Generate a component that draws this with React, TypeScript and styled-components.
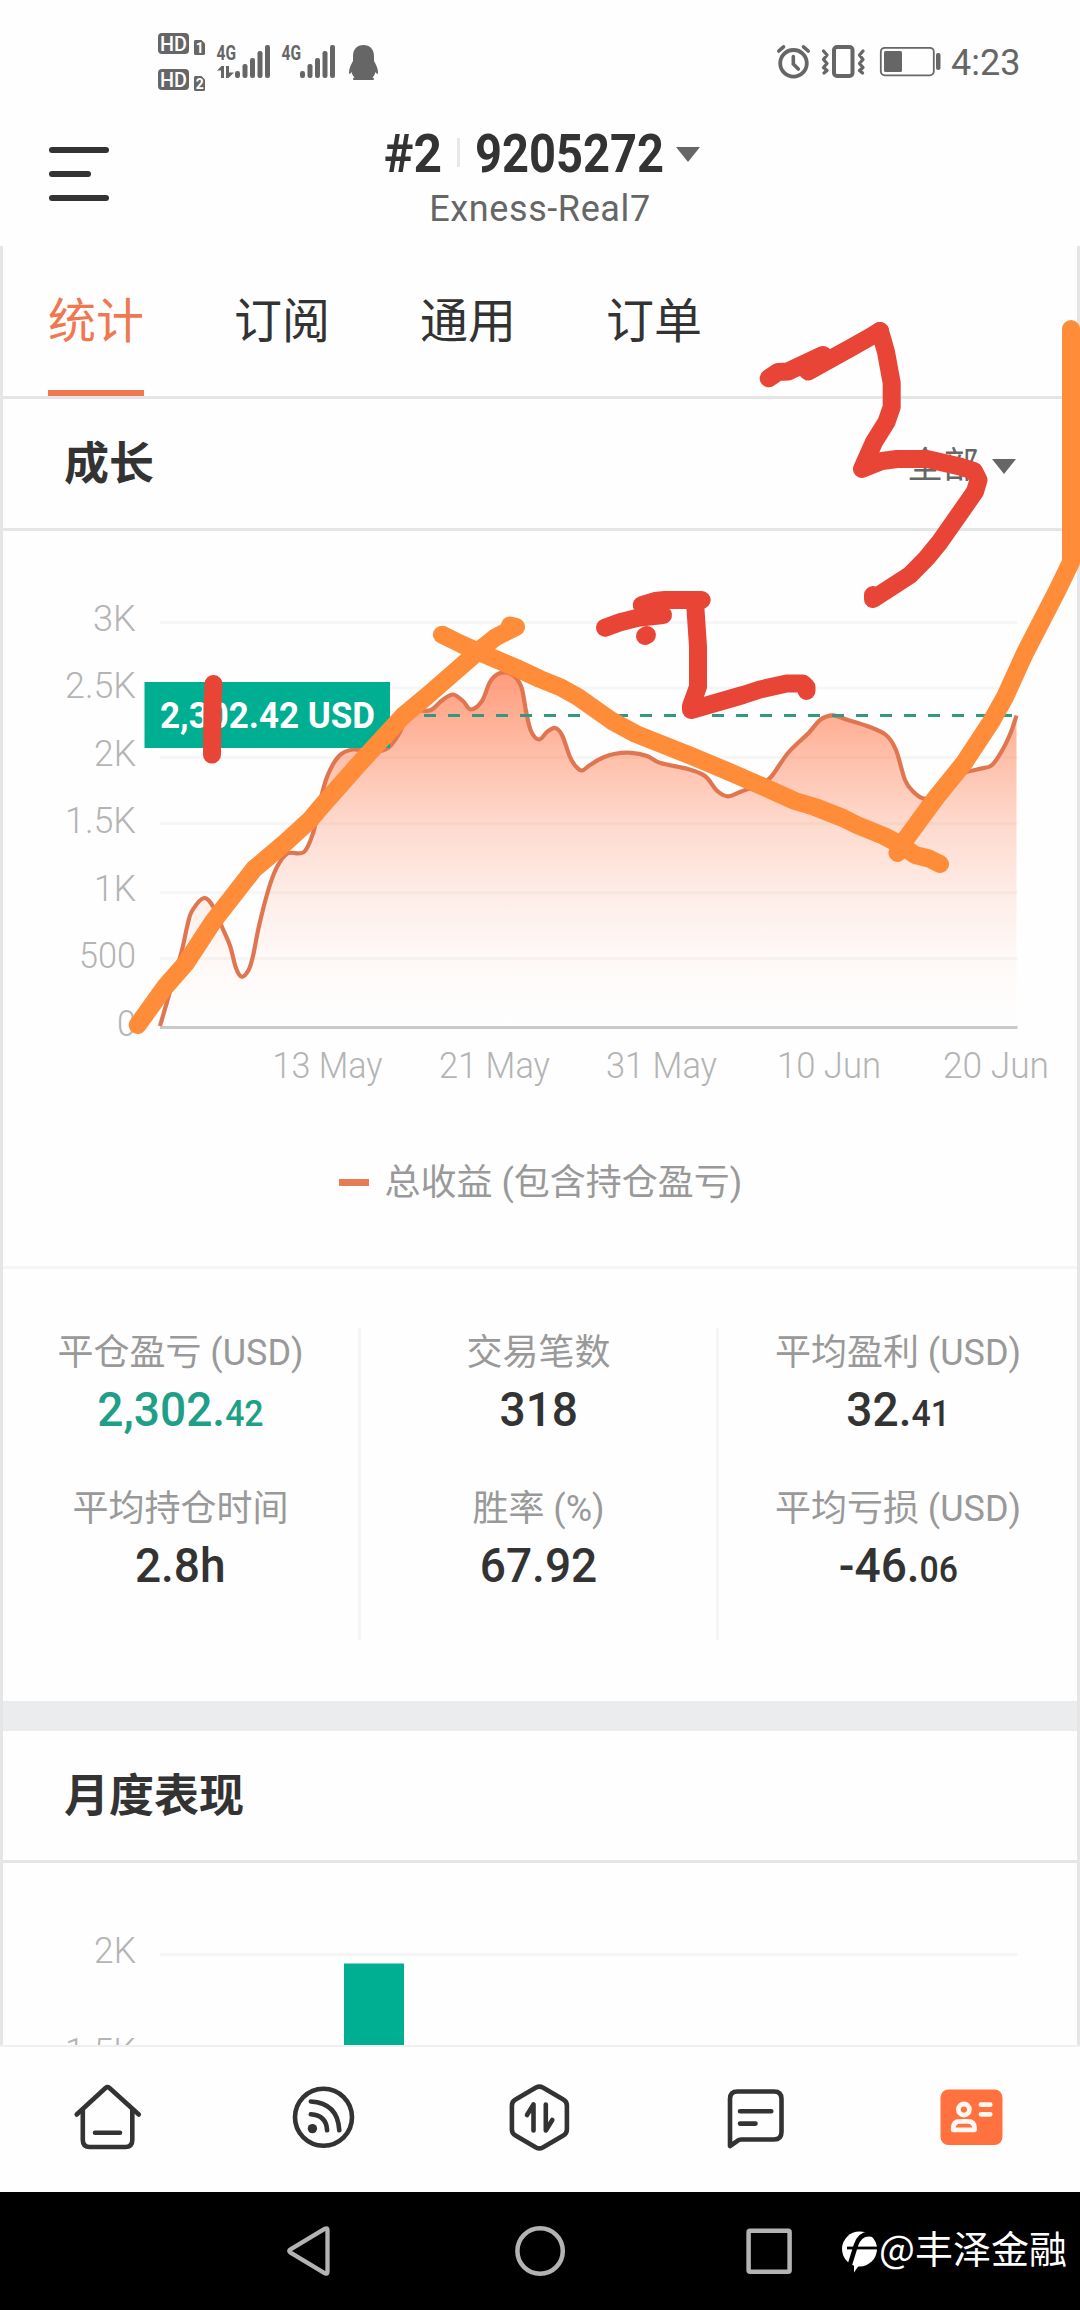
import React from "react";
import styled, { createGlobalStyle } from "styled-components";

const SANS = `Roboto, "Noto Sans CJK SC", sans-serif`;

const GlobalStyle = createGlobalStyle`
  * { box-sizing: border-box; }
  html, body { margin: 0; padding: 0; background: #fefefe; }
  body { font-family: ${SANS}; color: #333; overflow-x: hidden; }
`;

const Screen = styled.div`
  position: relative;
  width: 1080px;
  height: 2310px;
  display: flex;
  flex-direction: column;
  background: #fefefe;
  overflow: hidden;
`;

/* ---------- status bar ---------- */

const StatusBar = styled.div`
  height: 120px;
  flex: none;
  display: flex;
  justify-content: space-between;
  padding: 28px 60px 0 158px;
  color: #666;
`;

const StatusGroup = styled.div`
  display: flex;
  align-items: flex-start;
`;

const Clock = styled.span`
  width: 69px;
  margin-left: 9px;
  font-size: 36px;
  line-height: 71px;
  white-space: nowrap;
`;

/* ---------- header ---------- */

const Header = styled.header`
  height: 126px;
  flex: none;
  display: grid;
  grid-template-columns: 200px 1fr 200px;
`;

const MenuButton = styled.div`
  display: flex;
  flex-direction: column;
  gap: 18px;
  padding: 27px 0 0 49px;
`;

const MenuLine = styled.span<{ $w: number }>`
  width: ${(p) => p.$w}px;
  height: 6px;
  border-radius: 3px;
  background: #333;
`;

const Account = styled.div`
  display: flex;
  flex-direction: column;
  align-items: center;
`;

const AccountRow = styled.div`
  display: flex;
  align-items: center;
  height: 68px;
  width: 320px;
  padding-left: 4px;
`;

const Bold = styled.span<{ $w: number; $scale: number }>`
  width: ${(p) => p.$w}px;
  flex: none;
  font-size: 53.5px;
  line-height: 68px;
  font-weight: 700;
  white-space: nowrap;
  transform: scaleX(${(p) => p.$scale});
  transform-origin: 0 50%;
`;

const Separator = styled.span`
  width: 3px;
  height: 29px;
  margin: 0 15px 4px 14px;
  background: #e8e8e8;
`;

const Caret = styled.span`
  width: 0;
  height: 0;
  border-left: 12px solid transparent;
  border-right: 12px solid transparent;
  border-top: 15px solid #666;
`;

const Server = styled.div`
  font-size: 36px;
  line-height: 43px;
  letter-spacing: 0.6px;
  color: #666;
`;

/* ---------- content panel ---------- */

const Panel = styled.main`
  height: 1799px;
  flex: none;
  border-left: 3px solid #e5e5e5;
  border-right: 3px solid #e5e5e5;
  display: flex;
  flex-direction: column;
  overflow: hidden;
`;

const Tabs = styled.nav`
  height: 153px;
  flex: none;
  display: flex;
  gap: 90px;
  padding-left: 45px;
  border-bottom: 3px solid #e5e5e5;
`;

const Tab = styled.div<{ $active?: boolean }>`
  font-size: 48px;
  line-height: 151px;
  height: 150px;
  color: ${(p) => (p.$active ? "#f07850" : "#333")};
  border-bottom: ${(p) => (p.$active ? "6px solid #f07850" : "none")};
`;

const SectionHead = styled.div`
  height: 132px;
  flex: none;
  display: flex;
  align-items: center;
  justify-content: space-between;
  padding: 3px 61px 0 61px;
  border-bottom: 3px solid #e5e5e5;
`;

const SectionTitle = styled.h2`
  margin: 0;
  font-size: 45px;
  line-height: 60px;
  font-weight: 700;
`;

const Filter = styled.div`
  display: flex;
  align-items: center;
  gap: 13px;
  padding-top: 2px;
  font-size: 36px;
  line-height: 44px;
  color: #666;
`;

const Chart = styled.svg`
  display: block;
  flex: none;
  font-family: ${SANS};
`;

const Legend = styled.div`
  height: 169px;
  flex: none;
  display: flex;
  align-items: flex-start;
  justify-content: center;
  gap: 16px;
  font-size: 36px;
  line-height: 44px;
  color: #999;
  border-bottom: 3px solid #f5f5f5;
  padding: 61px 0 0 1px;
`;

const LegendMark = styled.span`
  width: 30px;
  height: 7px;
  margin-top: 18px;
  background: #e67c56;
`;

const Stats = styled.section`
  height: 432px;
  flex: none;
  display: grid;
  grid-template-columns: 358px 358px 358px;
  padding: 59px 0 61px;
`;

const StatColumn = styled.div`
  display: flex;
  flex-direction: column;
  align-items: center;
  gap: 42px;
  border-right: 3px solid #f5f5f5;
  &:last-child {
    border-right: none;
  }
`;

const Stat = styled.div`
  display: flex;
  flex-direction: column;
  align-items: center;
`;

const StatLabel = styled.div`
  height: 48px;
  font-size: 36px;
  line-height: 50px;
  color: #999;
  white-space: nowrap;
`;

const StatValue = styled.div<{ $positive?: boolean }>`
  height: 66px;
  font-size: 49px;
  line-height: 68px;
  font-weight: 500;
  white-space: nowrap;
  transform: scaleX(0.94);
  color: ${(p) => (p.$positive ? "#1f9f88" : "#333")};
`;

const Decimals = styled.span`
  font-size: 36px;
  line-height: 1;
`;

const Band = styled.div`
  height: 30px;
  flex: none;
  background: #ebeced;
`;

/* ---------- bottom bars ---------- */

const TabBar = styled.nav`
  height: 147px;
  flex: none;
  display: grid;
  grid-template-columns: repeat(5, 216px);
  border-top: 2px solid #f0f0f0;
`;

const TabBarItem = styled.div`
  display: flex;
  justify-content: center;
  padding-top: 30px;
`;

const SystemBar = styled.div`
  height: 118px;
  flex: none;
  display: flex;
  align-items: center;
  background: #000;
  padding-left: 283px;
`;

const SystemIcon = styled.svg<{ $gap: number }>`
  flex: none;
  margin-right: ${(p) => p.$gap}px;
`;

const Watermark = styled.div`
  display: flex;
  align-items: center;
  color: #fff;
  font-family: "Noto Sans CJK SC", sans-serif;
  font-size: 38px;
  line-height: 50px;
  white-space: nowrap;
`;

const WatermarkText = styled.span`
  margin-bottom: 8px;
`;

const Annotations = styled.svg`
  position: absolute;
  left: 0;
  top: 0;
  pointer-events: none;
`;

/* ---------- data ---------- */

type Point = [number, number];

const growth: Point[] = [
  [160, 1026], [170.5, 990], [181.5, 952], [187.5, 925], [192, 911], [204, 898], [214, 908],
  [222, 927], [230, 945.7], [236, 968], [241.7, 976.7], [248.6, 970], [253, 956],
  [259, 926], [268.6, 889], [277, 867], [287.5, 853.5], [304, 852], [313.4, 832],
  [318.5, 808], [327, 777], [339, 756], [353, 749.5], [371, 752], [388, 748], [399.5, 733],
  [407, 716], [418, 711], [431, 710], [442.5, 700], [453, 694.5], [463, 701], [471, 709.5],
  [482, 701], [490, 682], [499, 673.5], [511, 674], [521, 686], [526, 711], [531, 731],
  [539, 739.5], [547, 732], [555, 728], [562, 735], [570, 757], [576, 766.6],
  [582, 770.5], [590, 765], [602, 758], [614, 754], [631, 752.8], [647, 756],
  [660.5, 763], [688, 769], [705, 776], [717, 790.7], [728, 796.3], [740, 792],
  [760, 784], [771, 777], [788, 753], [808.6, 733], [820.6, 719.5], [833, 715.3],
  [848, 720], [867, 726], [886, 735], [896, 750], [905, 780], [913.6, 792],
  [924, 798.6], [936, 794], [949, 780], [965, 772.5], [979, 769], [992, 765], [1003, 749],
  [1011, 732], [1016.5, 715.6],
];

const smooth = (pts: Point[]): string => {
  let d = `M${pts[0][0]} ${pts[0][1]}`;
  for (let i = 0; i < pts.length - 1; i++) {
    const a = pts[Math.max(0, i - 1)];
    const b = pts[i];
    const c = pts[i + 1];
    const e = pts[Math.min(pts.length - 1, i + 2)];
    d += ` C${b[0] + (c[0] - a[0]) / 6} ${b[1] + (c[1] - a[1]) / 6} ${c[0] - (e[0] - b[0]) / 6} ${
      c[1] - (e[1] - b[1]) / 6
    } ${c[0]} ${c[1]}`;
  }
  return d;
};

const gridLevels = [622.5, 688, 757.5, 823.5, 892.5, 958.5];

const yLabels = [
  { t: "3K", x: 93, w: 43, y: 631 },
  { t: "2.5K", x: 65, w: 71, y: 698 },
  { t: "2K", x: 94, w: 42, y: 766 },
  { t: "1.5K", x: 65, w: 71, y: 833 },
  { t: "1K", x: 94, w: 42, y: 901 },
  { t: "500", x: 79, w: 57, y: 968 },
  { t: "0", x: 117, w: 19, y: 1036 },
];

const xLabels = [
  { t: "13 May", x: 272.5, w: 110 },
  { t: "21 May", x: 439, w: 111 },
  { t: "31 May", x: 606, w: 111 },
  { t: "10 Jun", x: 777, w: 104 },
  { t: "20 Jun", x: 943, w: 106 },
];

const stats = [
  [
    { label: "平仓盈亏 (USD)", whole: "2,302.", part: "42", positive: true },
    { label: "平均持仓时间", whole: "2.8h" },
  ],
  [
    { label: "交易笔数", whole: "318" },
    { label: "胜率 (%)", whole: "67.92" },
  ],
  [
    { label: "平均盈利 (USD)", whole: "32.", part: "41" },
    { label: "平均亏损 (USD)", whole: "-46.", part: "06" },
  ],
];

const orangeStrokes: Point[][] = [
  [[137.7, 1025], [165, 987], [186, 963], [213.5, 921], [254, 869], [286, 842], [310, 820], [320, 808], [358, 765], [403, 716], [427, 696], [482, 648], [496, 637], [516, 627], [510, 625.5]],
  [[442, 634.7], [461, 644], [479, 652], [516.5, 668], [540, 679], [561, 687.5], [578, 697], [612, 721], [636, 734], [691.5, 756], [733, 773.5], [764, 787], [795, 801], [815, 807], [843, 818], [857, 825], [884, 836], [901, 845], [915, 855], [929, 858.5], [940, 864]],
  [[897.5, 853], [905, 840], [936, 797.6], [964, 763], [991, 722], [1005, 697], [1025, 653], [1041, 622], [1057, 591], [1071, 562], [1071, 329]],
];

const redStrokes: Point[][] = [
  [[213.5, 684], [212.5, 704.6], [212, 754.6]],
  [[768.7, 378.3], [778, 372], [788, 371.5], [806, 363], [823, 355]],
  [[808, 371.5], [853, 346.7], [870, 337], [880, 331]],
  [[880, 331], [886, 352], [891.7, 383], [891.7, 407], [886.5, 422], [874, 442], [862, 469], [882, 461], [897, 459], [927, 459], [960, 466.5], [974, 471], [978.5, 480], [975, 491.7], [940, 541.7], [926.7, 558], [910, 575], [890, 588], [873, 599], [873, 595]],
  [[605, 627.7], [620, 622.3], [638, 617.7], [663, 615]],
  [[641.7, 605], [655, 601], [665, 600], [701.7, 600]],
  [[695, 602], [698, 646.7], [698, 686.7], [691, 706], [691, 710], [743, 695], [760, 689.5], [786.7, 683.5], [803, 683.5], [806.5, 687], [806.5, 691]],
  [[645, 636], [647, 635]],
];

const polyline = (pts: Point[]) => pts.map((p) => p.join(",")).join(" ");

/* ---------- icons ---------- */

const bars = [7, 14, 20, 27, 33];

const NetworkIcons = () => (
  <svg width="222" height="66" viewBox="158 28 222 66" fill="#666" fontFamily="Roboto, sans-serif">
    {[33, 69].map((y, i) => (
      <g key={y}>
        <rect x="158" y={y} width="31" height="21" rx="4" />
        <text x="160" y={y + 17.5} fontSize="20" fontWeight="500" fill="#fff" textLength="27" lengthAdjust="spacingAndGlyphs">
          HD
        </text>
        <path d={`M195 ${y + 7}h6.5l3.5 3.5v10q0 1.5-1.5 1.5h-8q-1.5 0-1.5-1.5v-12q0-1.5 1-1.5z`} />
        <text x="195.8" y={y + 19.5} fontSize="14.5" fontWeight="700" fill="#fff" textLength="8" lengthAdjust="spacingAndGlyphs">
          {i + 1}
        </text>
      </g>
    ))}
    {[217, 282].map((x) => (
      <g key={x}>
        <text x={x - 0.5} y="60" fontSize="21" fontWeight="700" textLength="19.5" lengthAdjust="spacingAndGlyphs">
          4G
        </text>
        {bars.map((h, i) => (
          <rect key={h} x={x + 18 + i * 7.5} y={78 - h} width="5" height={h} rx="2.2" />
        ))}
      </g>
    ))}
    <path d="M221.500 66h2.500v12h-3v-7.500h-4zM226 66h3v6.500h5l-5.500 5.500H226z" />
    <path d="M363.500 45c-6.500 0-10.500 4.500-10.500 11v5c-2 3.500-4 7.500-4 11.500 0 2 1 2 2.500-.5.500 2 1.500 4 3 5.500-2 .5-2 2.500-.5 2.500h19c1.500 0 1.500-2-.5-2.500 1.500-1.500 2.500-3.500 3-5.500 1.500 2.500 2.500 2.500 2.500.5 0-4-2-8-4-11.500v-5c0-6.500-4-11-10.500-11z" />
  </svg>
);

const DeviceIcons = () => (
  <svg width="166" height="60" viewBox="776 28 166 60" fill="none" stroke="#666" strokeLinecap="round">
    <circle cx="793.5" cy="63.300" r="13.300" strokeWidth="3.800" />
    <path d="M793.300 56.500v7.500l5 5" strokeWidth="3.600" />
    <path d="M778.800 51l4.700-4.200M808.200 51l-4.700-4.200" strokeWidth="3.600" />
    <rect x="834" y="47" width="18.500" height="29" rx="3" strokeWidth="4" />
    <path
      d="M823.500 51l3.500 4-3.500 4.500 3.500 4-3.500 4 3.500 3-3 2.500M863 51l-3.500 4 3.500 4.500-3.500 4 3.500 4-3.500 3 3 2.500"
      strokeWidth="3.300"
      strokeLinejoin="round"
    />
    <rect x="880.800" y="47.800" width="53" height="27.500" rx="4" strokeWidth="1.800" />
    <rect x="884" y="51" width="18" height="21" rx="1.500" fill="#666" stroke="none" />
    <rect x="936" y="53" width="4.500" height="17" rx="2" fill="#666" stroke="none" />
  </svg>
);

const NavIcon = ({ x, children }: { x: number; children: React.ReactNode }) => (
  <svg
    width="80"
    height="80"
    viewBox={`${x - 40} 2077 80 80`}
    fill="none"
    stroke="#333"
    strokeWidth="4.600"
    strokeLinecap="round"
    strokeLinejoin="round"
  >
    {children}
  </svg>
);

/* ---------- screen ---------- */

export default function App() {
  const line = smooth(growth);
  return (
    <Screen>
      <GlobalStyle />
      <StatusBar>
        <StatusGroup>
          <NetworkIcons />
        </StatusGroup>
        <StatusGroup>
          <DeviceIcons />
          <Clock>4:23</Clock>
        </StatusGroup>
      </StatusBar>

      <Header>
        <MenuButton>
          <MenuLine $w={60} />
          <MenuLine $w={42} />
          <MenuLine $w={60} />
        </MenuButton>
        <Account>
          <AccountRow>
            <Bold $w={59} $scale={0.93}>#2</Bold>
            <Separator />
            <Bold $w={201} $scale={0.88}>9205272</Bold>
            <Caret />
          </AccountRow>
          <Server>Exness-Real7</Server>
        </Account>
      </Header>

      <Panel>
        <Tabs>
          <Tab $active>统计</Tab>
          <Tab>订阅</Tab>
          <Tab>通用</Tab>
          <Tab>订单</Tab>
        </Tabs>

        <SectionHead>
          <SectionTitle>成长</SectionTitle>
          <Filter>
            全部
            <Caret />
          </Filter>
        </SectionHead>

        <Chart width="1074" height="569" viewBox="3 531 1074 569">
          <defs>
            <linearGradient id="area" gradientUnits="userSpaceOnUse" x1="0" y1="672" x2="0" y2="1026">
              <stop offset="0" stopColor="#ff7243" stopOpacity="0.7" />
              <stop offset="0.22" stopColor="#ff7243" stopOpacity="0.47" />
              <stop offset="0.43" stopColor="#ff7243" stopOpacity="0.26" />
              <stop offset="0.62" stopColor="#ff7243" stopOpacity="0.13" />
              <stop offset="0.8" stopColor="#ff7243" stopOpacity="0.04" />
              <stop offset="1" stopColor="#ff7243" stopOpacity="0" />
            </linearGradient>
          </defs>
          {gridLevels.map((y) => (
            <line key={y} x1="160" x2="1017.5" y1={y} y2={y} stroke="#f6f6f6" strokeWidth="3" />
          ))}
          <line x1="160" x2="1017.5" y1="1027.5" y2="1027.5" stroke="#c9c9c9" strokeWidth="3" />
          <path d={`${line} V1026 H160 Z`} fill="url(#area)" />
          <path d={line} fill="none" stroke="#e07650" strokeWidth="4.200" strokeLinejoin="round" />
          <line x1="160" x2="1016" y1="715.5" y2="715.5" stroke="#33987f" strokeWidth="3" strokeDasharray="12 12" />
          <g fill="#b4b4b4" fontSize="36.5" fontWeight="300">
            {yLabels.map((l) => (
              <text key={l.t} x={l.x} y={l.y} textLength={l.w} lengthAdjust="spacingAndGlyphs">
                {l.t}
              </text>
            ))}
            {xLabels.map((l) => (
              <text key={l.t} x={l.x} y="1078" textLength={l.w} lengthAdjust="spacingAndGlyphs">
                {l.t}
              </text>
            ))}
          </g>
          <rect x="144.5" y="682" width="245.5" height="66" fill="#00ae92" />
          <text x="160" y="728" fill="#fff" fontSize="36.5" fontWeight="700" textLength="215" lengthAdjust="spacingAndGlyphs">
            2,302.42 USD
          </text>
        </Chart>

        <Legend>
          <LegendMark />
          总收益 (包含持仓盈亏)
        </Legend>

        <Stats>
          {stats.map((column, i) => (
            <StatColumn key={i}>
              {column.map((s) => (
                <Stat key={s.label}>
                  <StatLabel>{s.label}</StatLabel>
                  <StatValue $positive={s.positive}>
                    {s.whole}
                    {s.part && <Decimals>{s.part}</Decimals>}
                  </StatValue>
                </Stat>
              ))}
            </StatColumn>
          ))}
        </Stats>

        <Band />

        <SectionHead>
          <SectionTitle>月度表现</SectionTitle>
        </SectionHead>

        <Chart width="1074" height="182" viewBox="3 1863 1074 182">
          <line x1="160" x2="1017.5" y1="1954.500" y2="1954.500" stroke="#f6f6f6" strokeWidth="3" />
          <g fill="#b4b4b4" fontSize="36.5" fontWeight="300">
            <text x="94" y="1963" textLength="42" lengthAdjust="spacingAndGlyphs">2K</text>
            <text x="65" y="2064" textLength="71" lengthAdjust="spacingAndGlyphs">1.5K</text>
          </g>
          <rect x="344" y="1963.500" width="60" height="90" fill="#00ae92" />
        </Chart>
      </Panel>

      <TabBar>
        <TabBarItem>
          <NavIcon x={108}>
            <path d="M76.700 2114.500L105.500 2088q2-1.700 4 0L138.800 2114.500" />
            <path d="M82.800 2109.500v30.500q0 7 7 7h35.500q7 0 7-7v-30.500M95 2132.800h25" />
          </NavIcon>
        </TabBarItem>
        <TabBarItem>
          <NavIcon x={324}>
            <circle cx="323.500" cy="2117.300" r="28.500" />
            <circle cx="312.400" cy="2128.600" r="4.700" fill="#333" stroke="none" />
            <path d="M310.800 2114.300q15.500 1 16.300 16M310.800 2101.500q27 1.500 28.500 28.800" />
          </NavIcon>
        </TabBarItem>
        <TabBarItem>
          <NavIcon x={540}>
            <path d="M536 2087.500q3.400-1.800 6.800 0l20.500 12q3.600 2 3.600 6v24q0 4-3.600 6l-20.500 12q-3.400 1.800-6.800 0l-20.500-12q-3.600-2-3.600-6v-24q0-4 3.600-6z" />
            <path d="M527 2115l6.500-10.500V2130.500M545.800 2104.500V2130.500l6.500-10.500" />
          </NavIcon>
        </TabBarItem>
        <TabBarItem>
          <NavIcon x={756}>
            <path d="M730 2146V2099q0-7.500 7.500-7.500h36.500q7.500 0 7.500 7.500v33q0 7.500-7.500 7.500h-33q-2 0-3.500 1.300z" />
            <path d="M740 2111.300h31.300M740 2123.600h15.500" />
          </NavIcon>
        </TabBarItem>
        <TabBarItem>
          <NavIcon x={972}>
            <rect x="940.500" y="2089.500" width="62" height="55.500" rx="8" fill="#ff7240" stroke="none" />
            <g stroke="#fff8f2" strokeWidth="4.800">
              <circle cx="963.900" cy="2109.500" r="5.500" />
              <path d="M953.200 2129.800v-1.500q0-7 7-7h7.400q7 0 7 7v1.500z" />
              <path d="M981 2104.700h9.200M981 2114.300h9.200" />
            </g>
          </NavIcon>
        </TabBarItem>
      </TabBar>

      <SystemBar>
        <SystemIcon $gap={177} width="50" height="56" viewBox="283 2223 50 56" fill="none" stroke="#b3b3b3" strokeWidth="4.300" strokeLinejoin="round">
          <path d="M290.500 2249.300L325 2228.700q2.500-1 2.500 1.300V2272q0 2.500-2.500 1.300L290.500 2252.700q-2.500-1.700 0-3.400z" />
        </SystemIcon>
        <SystemIcon $gap={171} width="60" height="60" viewBox="510 2221 60 60" fill="none" stroke="#b3b3b3" strokeWidth="4.500">
          <circle cx="540.100" cy="2251" r="22.700" />
        </SystemIcon>
        <SystemIcon $gap={45} width="56" height="56" viewBox="741 2223 56 56" fill="none" stroke="#b3b3b3" strokeWidth="4.500">
          <rect x="748.600" y="2230.700" width="41" height="41" rx="1.500" />
        </SystemIcon>
        <Watermark>
          <svg width="37" height="50" viewBox="842 2226 37 50">
            <circle cx="859.500" cy="2249" r="17.500" fill="#fff" />
            <path d="M854 2258h14q-9 6-14 14.500z" fill="#fff" />
            <path d="M874 2235q-13-4-18 10l-7.500 24" fill="none" stroke="#000" strokeWidth="4.500" />
            <path d="M847 2248h32" stroke="#000" strokeWidth="2.800" />
          </svg>
          <WatermarkText>@丰泽金融</WatermarkText>
        </Watermark>
      </SystemBar>

      <Annotations width="1080" height="1100" viewBox="0 0 1080 1100" fill="none" strokeWidth="18" strokeLinecap="round" strokeLinejoin="round">
        {orangeStrokes.map((s, i) => (
          <polyline key={`o${i}`} points={polyline(s)} stroke="#ff8c38" />
        ))}
        {redStrokes.map((s, i) => (
          <polyline key={`r${i}`} points={polyline(s)} stroke="#e94537" />
        ))}
      </Annotations>
    </Screen>
  );
}
